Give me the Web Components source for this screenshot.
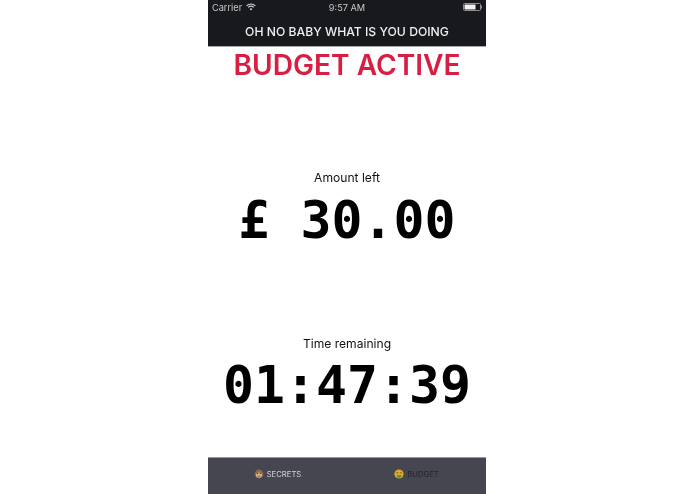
<!DOCTYPE html>
<html>
<head>
<meta charset="utf-8">
<title>Budget</title>
<style>
html, body { margin: 0; height: 100%; background: #fff; }
body { display: flex; justify-content: center; font-family: Inter, "Liberation Sans", sans-serif; padding-right: 1px; box-sizing: border-box; }
</style>
</head>
<body>
<phone-screen>
  <status-bar slot="top" carrier="Carrier" time="9:57 AM"></status-bar>
  <nav-title slot="top">OH NO BABY WHAT IS YOU DOING</nav-title>
  <big-banner>BUDGET ACTIVE</big-banner>
  <read-out label="Amount left" value="£ 30.00" style="--gap-top:87px;--label-gap:4px"></read-out>
  <read-out label="Time remaining" value="01:47:39" style="--gap-top:86px;--label-gap:3px"></read-out>
  <tab-bar slot="bottom">
    <tab-item active label="SECRETS">
      <svg slot="icon" width="10" height="10" viewBox="0 0 10 10">
        <circle cx="5" cy="5" r="4.4" fill="#8a6a48"/>
        <ellipse cx="5" cy="6" rx="3" ry="2.6" fill="#d9b68c"/>
        <circle cx="3.6" cy="4.6" r=".7" fill="#3a2a1e"/>
        <circle cx="6.4" cy="4.6" r=".7" fill="#3a2a1e"/>
        <path d="M3.6 7.2h2.8" stroke="#5a4030" stroke-width=".7"/>
      </svg>
    </tab-item>
    <tab-item label="BUDGET">
      <svg slot="icon" width="10" height="10" viewBox="0 0 10 10">
        <circle cx="5" cy="5" r="4.6" fill="#e0a92e"/>
        <path d="M2.6 6h4.8v1.2a2.4 2 0 0 1-4.8 0z" fill="#5c9a3c"/>
        <path d="M2.2 3.8h2M5.8 3.8h2" stroke="#6b4a14" stroke-width=".8"/>
      </svg>
    </tab-item>
  </tab-bar>
</phone-screen>

<script>
function shadow(el, html) {
  el.attachShadow({ mode: "open" }).innerHTML = html;
}

class PhoneScreen extends HTMLElement {
  constructor() {
    super();
    shadow(this, `
      <style>
        :host { display: flex; flex-direction: column; width: 278px; height: 494px; background: #fff; filter: blur(.35px); }
        header { background: #18191d; border-bottom: 1px solid #a9a9ab; }
        main { flex: 1; display: flex; flex-direction: column; align-items: center; }
      </style>
      <header><slot name="top"></slot></header>
      <main><slot></slot></main>
      <slot name="bottom"></slot>
    `);
  }
}

class StatusBar extends HTMLElement {
  constructor() {
    super();
    shadow(this, `
      <style>
        :host { display: grid; grid-template-columns: 1fr auto 1fr; align-items: center; height: 14px; padding: 0 4px; color: #c9c9cb; font: 9.2px Inter, "Liberation Sans", sans-serif; }
        .left { display: flex; align-items: center; gap: 4px; }
        .right { display: flex; justify-content: flex-end; }
      </style>
      <div class="left">
        <span>${this.getAttribute("carrier")}</span>
        <svg width="10" height="8" viewBox="0 0 10 8" fill="none" stroke="#d4d4d6">
          <path d="M.6 2.8a6.4 6.4 0 0 1 8.8 0" stroke-width="1.1"/>
          <path d="M2.2 4.4a4.2 4.2 0 0 1 5.6 0" stroke-width="1.1"/>
          <path d="M5 7.6 3.6 6a2 2 0 0 1 2.8 0z" fill="#d4d4d6" stroke="none"/>
        </svg>
      </div>
      <span>${this.getAttribute("time")}</span>
      <div class="right">
        <svg width="19" height="8" viewBox="0 0 19 8">
          <rect x=".5" y=".5" width="17" height="7" rx="1" fill="none" stroke="#8d8d90"/>
          <rect x="1.5" y="1.5" width="11" height="5" fill="#f2f2f2"/>
          <rect x="18" y="2.5" width="1" height="3" fill="#8d8d90"/>
        </svg>
      </div>
    `);
  }
}

class NavTitle extends HTMLElement {
  constructor() {
    super();
    shadow(this, `
      <style>
        :host { display: block; height: 32px; box-sizing: border-box; padding-top: 2px; text-align: center; color: #f0f0f2; font: 500 12.2px/32px Inter, "Liberation Sans", sans-serif; white-space: nowrap; }
      </style>
      <slot></slot>
    `);
  }
}

class BigBanner extends HTMLElement {
  constructor() {
    super();
    shadow(this, `
      <style>
        :host { display: block; color: #d81e42; font: 600 28.1px/36px Inter, "Liberation Sans", sans-serif; white-space: nowrap; }
      </style>
      <slot></slot>
    `);
  }
}

class ReadOut extends HTMLElement {
  constructor() {
    super();
    shadow(this, `
      <style>
        :host { display: flex; flex-direction: column; align-items: center; margin-top: var(--gap-top, 0); color: #000; }
        .label { font: 400 12.1px/16px Inter, "Liberation Sans", sans-serif; color: #111; margin-bottom: var(--label-gap, 0); }
        .value { font: 700 51.5px/60px "DejaVu Sans Mono", "Liberation Mono", monospace; white-space: pre; }
      </style>
      <div class="label">${this.getAttribute("label")}</div>
      <div class="value">${this.getAttribute("value")}</div>
    `);
  }
}

class TabBar extends HTMLElement {
  constructor() {
    super();
    shadow(this, `
      <style>
        :host { display: grid; grid-template-columns: 1fr 1fr; height: 37px; background: #45464f; border-top: 1px solid #9a9a9d; box-sizing: border-box; }
      </style>
      <slot></slot>
    `);
  }
}

class TabItem extends HTMLElement {
  constructor() {
    super();
    shadow(this, `
      <style>
        :host { display: flex; align-items: center; justify-content: center; gap: 3px; padding-bottom: 4px; color: #24252b; font: 7.7px Inter, "Liberation Sans", sans-serif; }
        :host([active]) { color: #d5d5da; }
      </style>
      <slot name="icon"></slot>
      <span>${this.getAttribute("label")}</span>
    `);
  }
}

customElements.define("phone-screen", PhoneScreen);
customElements.define("status-bar", StatusBar);
customElements.define("nav-title", NavTitle);
customElements.define("big-banner", BigBanner);
customElements.define("read-out", ReadOut);
customElements.define("tab-bar", TabBar);
customElements.define("tab-item", TabItem);
</script>
</body>
</html>
